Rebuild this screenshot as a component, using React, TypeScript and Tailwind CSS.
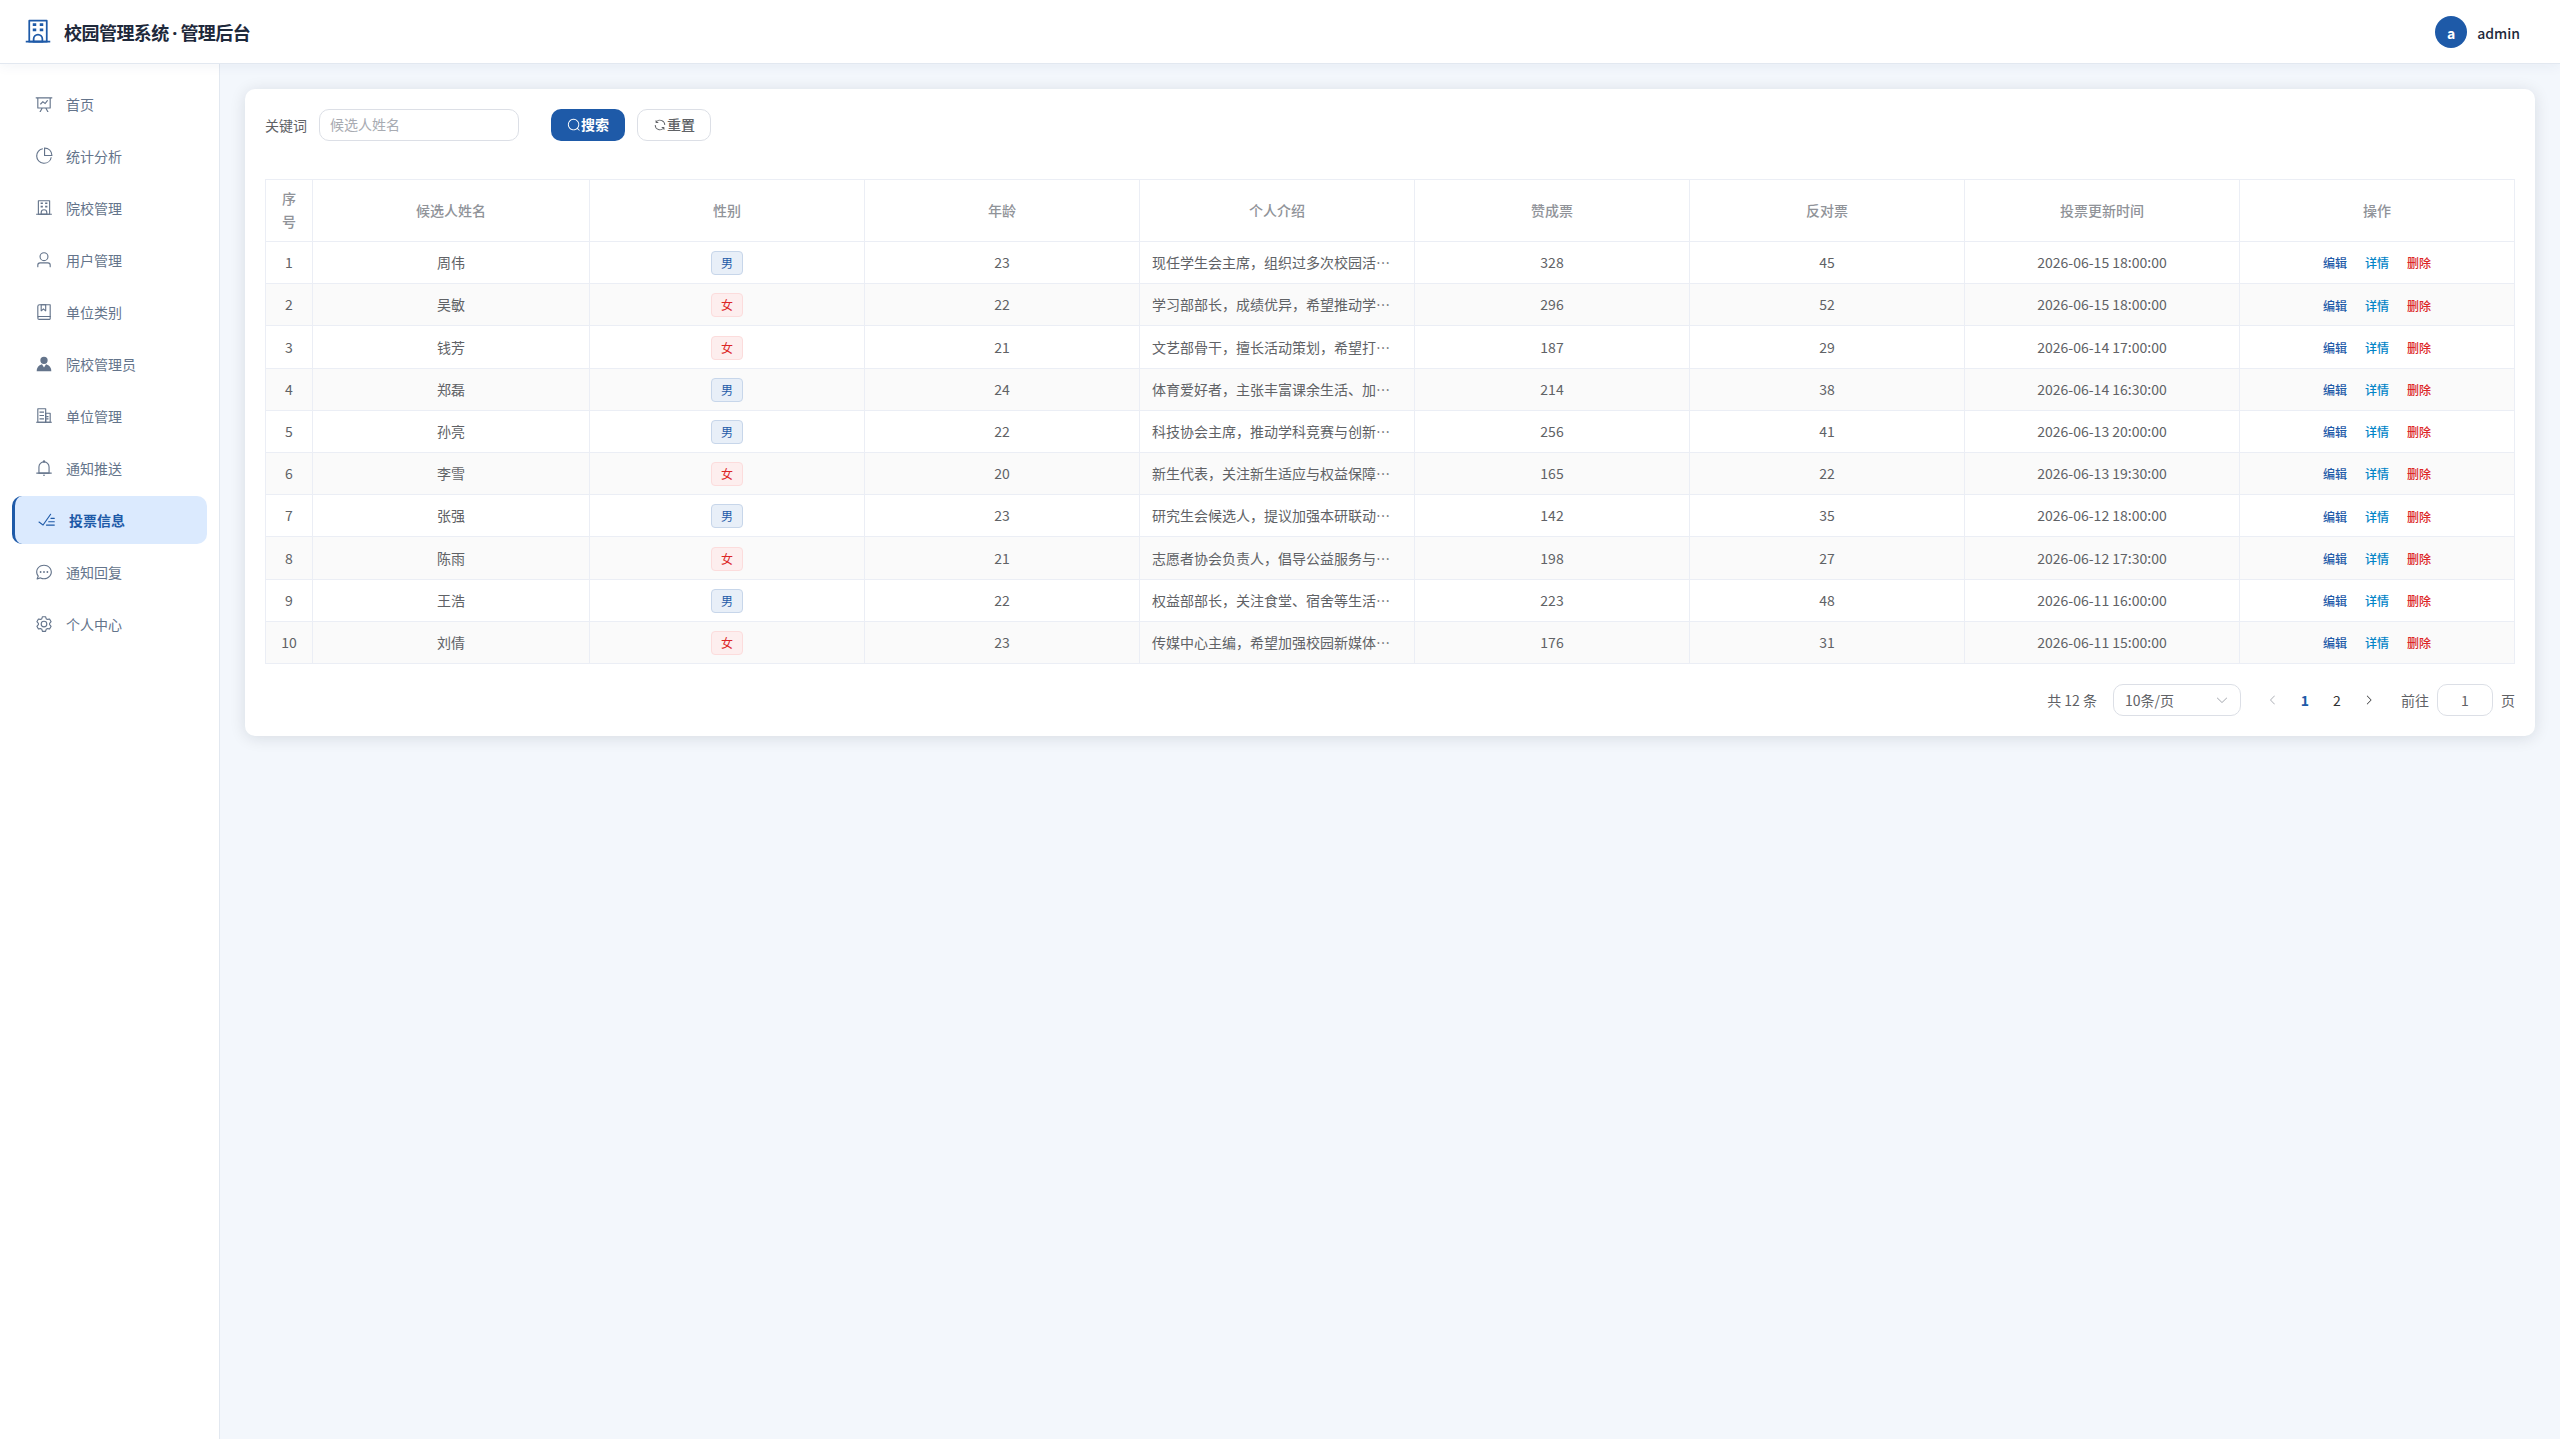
import React from "react";

const ICONS: Record<string, string[]> = {
  school: [
    "M224 128v704h576V128zm-32-64h640a32 32 0 0 1 32 32v768a32 32 0 0 1-32 32H192a32 32 0 0 1-32-32V96a32 32 0 0 1 32-32",
    "M64 832h896v64H64zm256-640h128v96H320z",
    "M384 832h256v-64a128 128 0 1 0-256 0zm128-256a192 192 0 0 1 192 192v128H320V768a192 192 0 0 1 192-192M320 384h128v96H320zm256-192h128v96H576zm0 192h128v96H576z",
  ],
  dataLine: [
    "M359.168 768H160a32 32 0 0 1-32-32V192H64a32 32 0 0 1 0-64h896a32 32 0 1 1 0 64h-64v544a32 32 0 0 1-32 32H665.216l110.848 192h-73.856L591.36 768H433.024L322.176 960H248.32zM832 192H192v512h640zM342.656 534.656a32 32 0 1 1-45.312-45.312L444.992 341.76l125.44 94.08L679.04 300.032a32 32 0 1 1 49.92 39.936L581.632 524.224 451.008 426.24 342.656 534.592z",
  ],
  pie: [
    "M448 68.48v64.832A384.128 384.128 0 0 0 512 896a384.128 384.128 0 0 0 378.688-320h64.768A448.128 448.128 0 0 1 64 512 448.128 448.128 0 0 1 448 68.48z",
    "M576 97.28V448h350.72A384.064 384.064 0 0 0 576 97.28zM512 64V33.152A448 448 0 0 1 990.848 512H512z",
  ],
  user: [
    "M512 512a192 192 0 1 0 0-384 192 192 0 0 0 0 384m0 64a256 256 0 1 1 0-512 256 256 0 0 1 0 512m320 320v-96a96 96 0 0 0-96-96H288a96 96 0 0 0-96 96v96a32 32 0 1 1-64 0v-96a160 160 0 0 1 160-160h448a160 160 0 0 1 160 160v96a32 32 0 1 1-64 0",
  ],
  collection: [
    "M192 736h640V128H256a64 64 0 0 0-64 64zm64-672h608a32 32 0 0 1 32 32v672a32 32 0 0 1-32 32H160l-32 57.536V192A128 128 0 0 1 256 64",
    "M240 800a48 48 0 1 0 0 96h592v-96zm0-64h656v160a64 64 0 0 1-64 64H240a112 112 0 0 1 0-224m144-608v250.88l96-76.8 96 76.8V128zm-64-64h320v381.44a32 32 0 0 1-51.968 24.96L480 384l-108.032 86.4A32 32 0 0 1 320 445.44z",
  ],
  avatar: [
    "M628.736 528.896A416 416 0 0 1 928 928H96a415.872 415.872 0 0 1 299.264-399.104L512 704zM720 304a208 208 0 1 1-416 0 208 208 0 0 1 416 0",
  ],
  office: [
    "M192 128v704h384V128zm-32-64h448a32 32 0 0 1 32 32v768a32 32 0 0 1-32 32H160a32 32 0 0 1-32-32V96a32 32 0 0 1 32-32",
    "M256 256h256v64H256zm0 192h256v64H256zm0 192h256v64H256zm384-128h128v64H640zm0 128h128v64H640zM64 832h896v64H64z",
    "M640 384v448h192V384zm-32-64h256a32 32 0 0 1 32 32v512a32 32 0 0 1-32 32H608a32 32 0 0 1-32-32V352a32 32 0 0 1 32-32",
  ],
  bell: [
    "M512 64a64 64 0 0 1 64 64v64H448v-64a64 64 0 0 1 64-64",
    "M256 768h512V448a256 256 0 1 0-512 0zm256-640a320 320 0 0 1 320 320v384H192V448a320 320 0 0 1 320-320",
    "M96 768h832q32 0 32 32t-32 32H96q-32 0-32-32t32-32m352 128h128a64 64 0 0 1-128 0",
  ],
  finished: [
    "M280.768 753.728 691.456 167.04a32 32 0 1 1 52.416 36.672L314.24 817.472a32 32 0 0 1-45.44 7.296l-230.4-172.8a32 32 0 0 1 38.4-51.2zM736 448a32 32 0 1 1 0-64h192a32 32 0 1 1 0 64zM608 640a32 32 0 0 1 0-64h319.936a32 32 0 1 1 0 64zM480 832a32 32 0 1 1 0-64h447.936a32 32 0 1 1 0 64z",
  ],
  chat: [
    "m174.72 855.68 135.296-45.12 23.68 11.84C388.096 849.536 448.576 864 512 864c211.84 0 384-166.784 384-352S723.84 160 512 160 128 326.784 128 512c0 69.12 24.96 139.264 70.848 199.232l22.08 28.8-46.272 115.584zm-45.248 82.56A32 32 0 0 1 89.6 896l58.368-145.92C94.72 680.32 64 596.864 64 512 64 299.904 256 96 512 96s448 203.904 448 416-192 416-448 416a461.056 461.056 0 0 1-206.912-48.384l-175.616 58.56z",
    "M512 563.2a51.2 51.2 0 1 1 0-102.4 51.2 51.2 0 0 1 0 102.4m192 0a51.2 51.2 0 1 1 0-102.4 51.2 51.2 0 0 1 0 102.4m-384 0a51.2 51.2 0 1 1 0-102.4 51.2 51.2 0 0 1 0 102.4",
  ],
  setting: [
    "M600.704 64a32 32 0 0 1 30.464 22.208l35.2 109.376c14.784 7.232 28.928 15.36 42.432 24.512l112.384-24.192a32 32 0 0 1 34.432 15.36L944.32 364.8a32 32 0 0 1-4.032 37.504l-77.12 85.12a357 357 0 0 1 0 49.024l77.12 85.248a32 32 0 0 1 4.032 37.504l-88.704 153.6a32 32 0 0 1-34.432 15.296L708.8 803.904c-13.44 9.088-27.648 17.28-42.368 24.512l-35.264 109.376A32 32 0 0 1 600.704 960H423.296a32 32 0 0 1-30.464-22.208L357.696 828.48a352 352 0 0 1-42.56-24.64l-112.32 24.256a32 32 0 0 1-34.432-15.36L79.68 659.2a32 32 0 0 1 4.032-37.504l77.12-85.248a357 357 0 0 1 0-48.896l-77.12-85.248A32 32 0 0 1 79.68 364.8l88.704-153.6a32 32 0 0 1 34.432-15.296l112.32 24.256c13.568-9.152 27.776-17.408 42.56-24.64l35.2-109.312A32 32 0 0 1 423.232 64H600.64zm-23.424 64H446.72l-36.352 113.088-24.512 11.968a294 294 0 0 0-34.816 20.096l-22.656 15.36-116.224-25.088-65.28 113.152 79.68 88.192-1.92 27.136a293 293 0 0 0 0 40.192l1.92 27.136-79.808 88.192 65.344 113.152 116.224-25.024 22.656 15.296a294 294 0 0 0 34.816 20.096l24.512 11.968L446.72 896h130.688l36.48-113.152 24.448-11.904a288 288 0 0 0 34.752-20.096l22.592-15.296 116.288 25.024 65.28-113.152-79.744-88.192 1.92-27.136a293 293 0 0 0 0-40.256l-1.92-27.136 79.808-88.128-65.344-113.152-116.288 24.96-22.592-15.232a288 288 0 0 0-34.752-20.096l-24.448-11.904L577.344 128zM512 320a192 192 0 1 1 0 384 192 192 0 0 1 0-384m0 64a128 128 0 1 0 0 256 128 128 0 0 0 0-256",
  ],
  search: [
    "m795.904 750.72 124.992 124.928a32 32 0 0 1-45.248 45.248L750.656 795.904a416 416 0 1 1 45.248-45.248zM480 832a352 352 0 1 0 0-704 352 352 0 0 0 0 704",
  ],
  refresh: [
    "M771.776 794.88A384 384 0 0 1 128 512h64a320 320 0 0 0 555.712 216.448H654.72a32 32 0 1 1 0-64h149.056a32 32 0 0 1 32 32v148.928a32 32 0 1 1-64 0v-50.56zM276.288 295.616h92.992a32 32 0 0 1 0 64H220.16a32 32 0 0 1-32-32V178.56a32 32 0 0 1 64 0v50.56A384 384 0 0 1 896.128 512h-64a320 320 0 0 0-555.776-216.384z",
  ],
  down: [
    "M831.872 340.864 512 652.672 192.128 340.864a30.592 30.592 0 0 0-42.752 0 29.12 29.12 0 0 0 0 41.6L489.664 714.24a32 32 0 0 0 44.672 0l340.288-331.712a29.12 29.12 0 0 0 0-41.728 30.592 30.592 0 0 0-42.752 0z",
  ],
  left: [
    "M609.408 149.376 277.76 489.6a32 32 0 0 0 0 44.672l331.648 340.352a29.12 29.12 0 0 0 41.728 0 30.592 30.592 0 0 0 0-42.752L339.264 511.936l311.872-319.872a30.592 30.592 0 0 0 0-42.688 29.12 29.12 0 0 0-41.728 0z",
  ],
  right: [
    "M340.864 149.312a30.592 30.592 0 0 0 0 42.752L652.736 512 340.864 831.872a30.592 30.592 0 0 0 0 42.752 29.12 29.12 0 0 0 41.728 0L714.24 534.336a32 32 0 0 0 0-44.672L382.592 149.376a29.12 29.12 0 0 0-41.728 0z",
  ],
};

function Icon({ name, className }: { name: string; className: string }) {
  return (
    <svg viewBox="0 0 1024 1024" fill="currentColor" className={`shrink-0 ${className}`}>
      {ICONS[name].map((d) => (
        <path key={d} d={d} />
      ))}
    </svg>
  );
}

const MENU = [
  ["dataLine", "首页"],
  ["pie", "统计分析"],
  ["school", "院校管理"],
  ["user", "用户管理"],
  ["collection", "单位类别"],
  ["avatar", "院校管理员"],
  ["office", "单位管理"],
  ["bell", "通知推送"],
  ["finished", "投票信息"],
  ["chat", "通知回复"],
  ["setting", "个人中心"],
];

const ACTIVE = "投票信息";

const HEADERS = ["候选人姓名", "性别", "年龄", "个人介绍", "赞成票", "反对票", "投票更新时间", "操作"];

const ROWS: [string, string, number, string, number, number, string][] = [
  ["周伟", "男", 23, "现任学生会主席，组织过多次校园活⋯", 328, 45, "2026-06-15 18:00:00"],
  ["吴敏", "女", 22, "学习部部长，成绩优异，希望推动学⋯", 296, 52, "2026-06-15 18:00:00"],
  ["钱芳", "女", 21, "文艺部骨干，擅长活动策划，希望打⋯", 187, 29, "2026-06-14 17:00:00"],
  ["郑磊", "男", 24, "体育爱好者，主张丰富课余生活、加⋯", 214, 38, "2026-06-14 16:30:00"],
  ["孙亮", "男", 22, "科技协会主席，推动学科竞赛与创新⋯", 256, 41, "2026-06-13 20:00:00"],
  ["李雪", "女", 20, "新生代表，关注新生适应与权益保障⋯", 165, 22, "2026-06-13 19:30:00"],
  ["张强", "男", 23, "研究生会候选人，提议加强本研联动⋯", 142, 35, "2026-06-12 18:00:00"],
  ["陈雨", "女", 21, "志愿者协会负责人，倡导公益服务与⋯", 198, 27, "2026-06-12 17:30:00"],
  ["王浩", "男", 22, "权益部部长，关注食堂、宿舍等生活⋯", 223, 48, "2026-06-11 16:00:00"],
  ["刘倩", "女", 23, "传媒中心主编，希望加强校园新媒体⋯", 176, 31, "2026-06-11 15:00:00"],
];

const GRID = "grid grid-cols-[47px_277px_repeat(7,275px)]";
const EDGE = "flex items-center border-r border-b border-[#ebeef5]";
const CELL = `${EDGE} justify-center pt-[0.3px]`;

function Tag({ value }: { value: string }) {
  const tone =
    value === "男"
      ? "border-[#c7d6ea] bg-[#e8eff8] text-[#1e5aa8]"
      : "border-[#fcdcdc] bg-[#fdeeee] text-[#dc2626]";
  return (
    <span className={`mt-px flex h-6 w-8 items-center justify-center rounded border text-xs ${tone}`}>
      {value}
    </span>
  );
}

function Header() {
  return (
    <header className="relative z-10 flex h-16 items-center justify-between border-b border-[#e2e8f0] bg-white pr-10 pl-6 shadow-[0_2px_12px_rgba(30,64,120,0.06)]">
      <div className="flex items-center gap-3">
        <Icon name="school" className="size-7 text-[#1e5aa8]" />
        <h1 className="pt-0.5 text-lg font-bold tracking-[-0.54px] text-[#1e293b]">
          校园管理系统 <span className="font-['Noto_Sans']">·</span> 管理后台
        </h1>
      </div>
      <div className="flex items-center gap-2.5">
        <span className="flex size-8 items-center justify-center rounded-full bg-[#1e5aa8] pt-0.5 text-sm font-semibold text-white">
          a
        </span>
        <span className="pt-0.5 text-sm font-medium text-[#1e293b]">admin</span>
      </div>
    </header>
  );
}

function Sidebar() {
  return (
    <nav className="flex w-[220px] shrink-0 flex-col gap-1 border-r border-[#e2e8f0] bg-white px-3 pt-4">
      {MENU.map(([icon, label]) => (
        <a
          key={label}
          className={`flex h-12 items-center gap-[10px] rounded-[10px] px-5 text-sm ${
            label === ACTIVE
              ? "border-l-3 border-[#1e5aa8] bg-[#dbeafe] font-semibold text-[#1e5aa8]"
              : "text-[#64748b]"
          }`}
        >
          <span className="flex w-6 justify-center">
            <Icon name={icon} className="size-[18px]" />
          </span>
          {label}
        </a>
      ))}
    </nav>
  );
}

function SearchBar() {
  return (
    <div className="flex h-8 items-center text-sm">
      <label className="text-[#606266]">关键词</label>
      <div className="ml-3 flex h-8 w-[200px] items-center rounded-[10px] border border-[#dcdfe6] px-[10px] text-[#a8abb2]">
        <span className="pb-0.5">候选人姓名</span>
      </div>
      <button className="ml-8 flex h-8 w-[74px] items-center justify-center rounded-[10px] bg-[#1e5aa8] font-semibold text-white">
        <Icon name="search" className="size-[14px]" />
        <span className="pb-0.5">搜索</span>
      </button>
      <button className="ml-3 flex h-8 w-[74px] items-center justify-center rounded-[10px] border border-[#dcdfe6] bg-white font-medium text-[#606266]">
        <Icon name="refresh" className="size-[14px]" />
        <span className="pb-0.5">重置</span>
      </button>
    </div>
  );
}

function VoteTable() {
  return (
    <div className="mt-[38px] border-t border-l border-[#ebeef5] text-sm leading-[23px] text-[#606266]">
      <div className={`${GRID} h-[62px] font-medium text-[#909399]`}>
        <div className={`${EDGE} flex-col justify-center pb-0.5`}>
          <span>序</span>
          <span>号</span>
        </div>
        {HEADERS.map((h) => (
          <div key={h} className={`${EDGE} justify-center`}>
            {h}
          </div>
        ))}
      </div>
      {ROWS.map(([name, sex, age, intro, yes, no, time], i) => (
        <div key={name} className={`${GRID} h-[42.2px] ${i % 2 ? "bg-[#fafafa]" : "bg-white"}`}>
          <div className={CELL}>{i + 1}</div>
          <div className={CELL}>{name}</div>
          <div className={CELL}>
            <Tag value={sex} />
          </div>
          <div className={CELL}>{age}</div>
          <div className={`${EDGE} px-3 pt-[0.3px] whitespace-nowrap`}>{intro}</div>
          <div className={CELL}>{yes}</div>
          <div className={CELL}>{no}</div>
          <div className={CELL}>{time}</div>
          <div className={`${EDGE} justify-center gap-[18px] pt-[0.6px] text-xs leading-[23px] font-medium`}>
            <a className="text-[#1e5aa8]">编辑</a>
            <a className="text-[#0284c7]">详情</a>
            <a className="text-[#dc2626]">删除</a>
          </div>
        </div>
      ))}
    </div>
  );
}

function Pagination() {
  return (
    <div className="mt-5 flex h-8 items-center justify-end text-sm text-[#606266]">
      <span>共 12 条</span>
      <div className="ml-4 flex h-8 w-32 items-center justify-between rounded-[10px] border border-[#dcdfe6] px-[11px]">
        <span>10条/页</span>
        <Icon name="down" className="size-[14px] text-[#a8abb2]" />
      </div>
      <div className="ml-4 flex text-[#303133]">
        <span className="flex size-8 items-center justify-center text-[#a8abb2]">
          <Icon name="left" className="size-3" />
        </span>
        <span className="flex size-8 items-center justify-center font-bold text-[#1e5aa8]">1</span>
        <span className="flex size-8 items-center justify-center">2</span>
        <span className="flex size-8 items-center justify-center">
          <Icon name="right" className="size-3" />
        </span>
      </div>
      <span className="ml-4">前往</span>
      <div className="mx-2 flex h-8 w-14 items-center justify-center rounded-[10px] border border-[#dcdfe6]">
        1
      </div>
      <span>页</span>
    </div>
  );
}

export default function App() {
  return (
    <div className="flex h-[1439px] w-[2560px] flex-col overflow-hidden bg-[#f3f7fc] font-['Noto_Sans_CJK_SC',sans-serif]">
      <Header />
      <div className="flex flex-1">
        <Sidebar />
        <main className="flex-1 px-[25px] pt-[25px]">
          <section className="h-[647px] rounded-[10px] bg-white p-5 shadow-[0_2px_16px_rgba(15,23,42,0.12)]">
            <SearchBar />
            <VoteTable />
            <Pagination />
          </section>
        </main>
      </div>
    </div>
  );
}
